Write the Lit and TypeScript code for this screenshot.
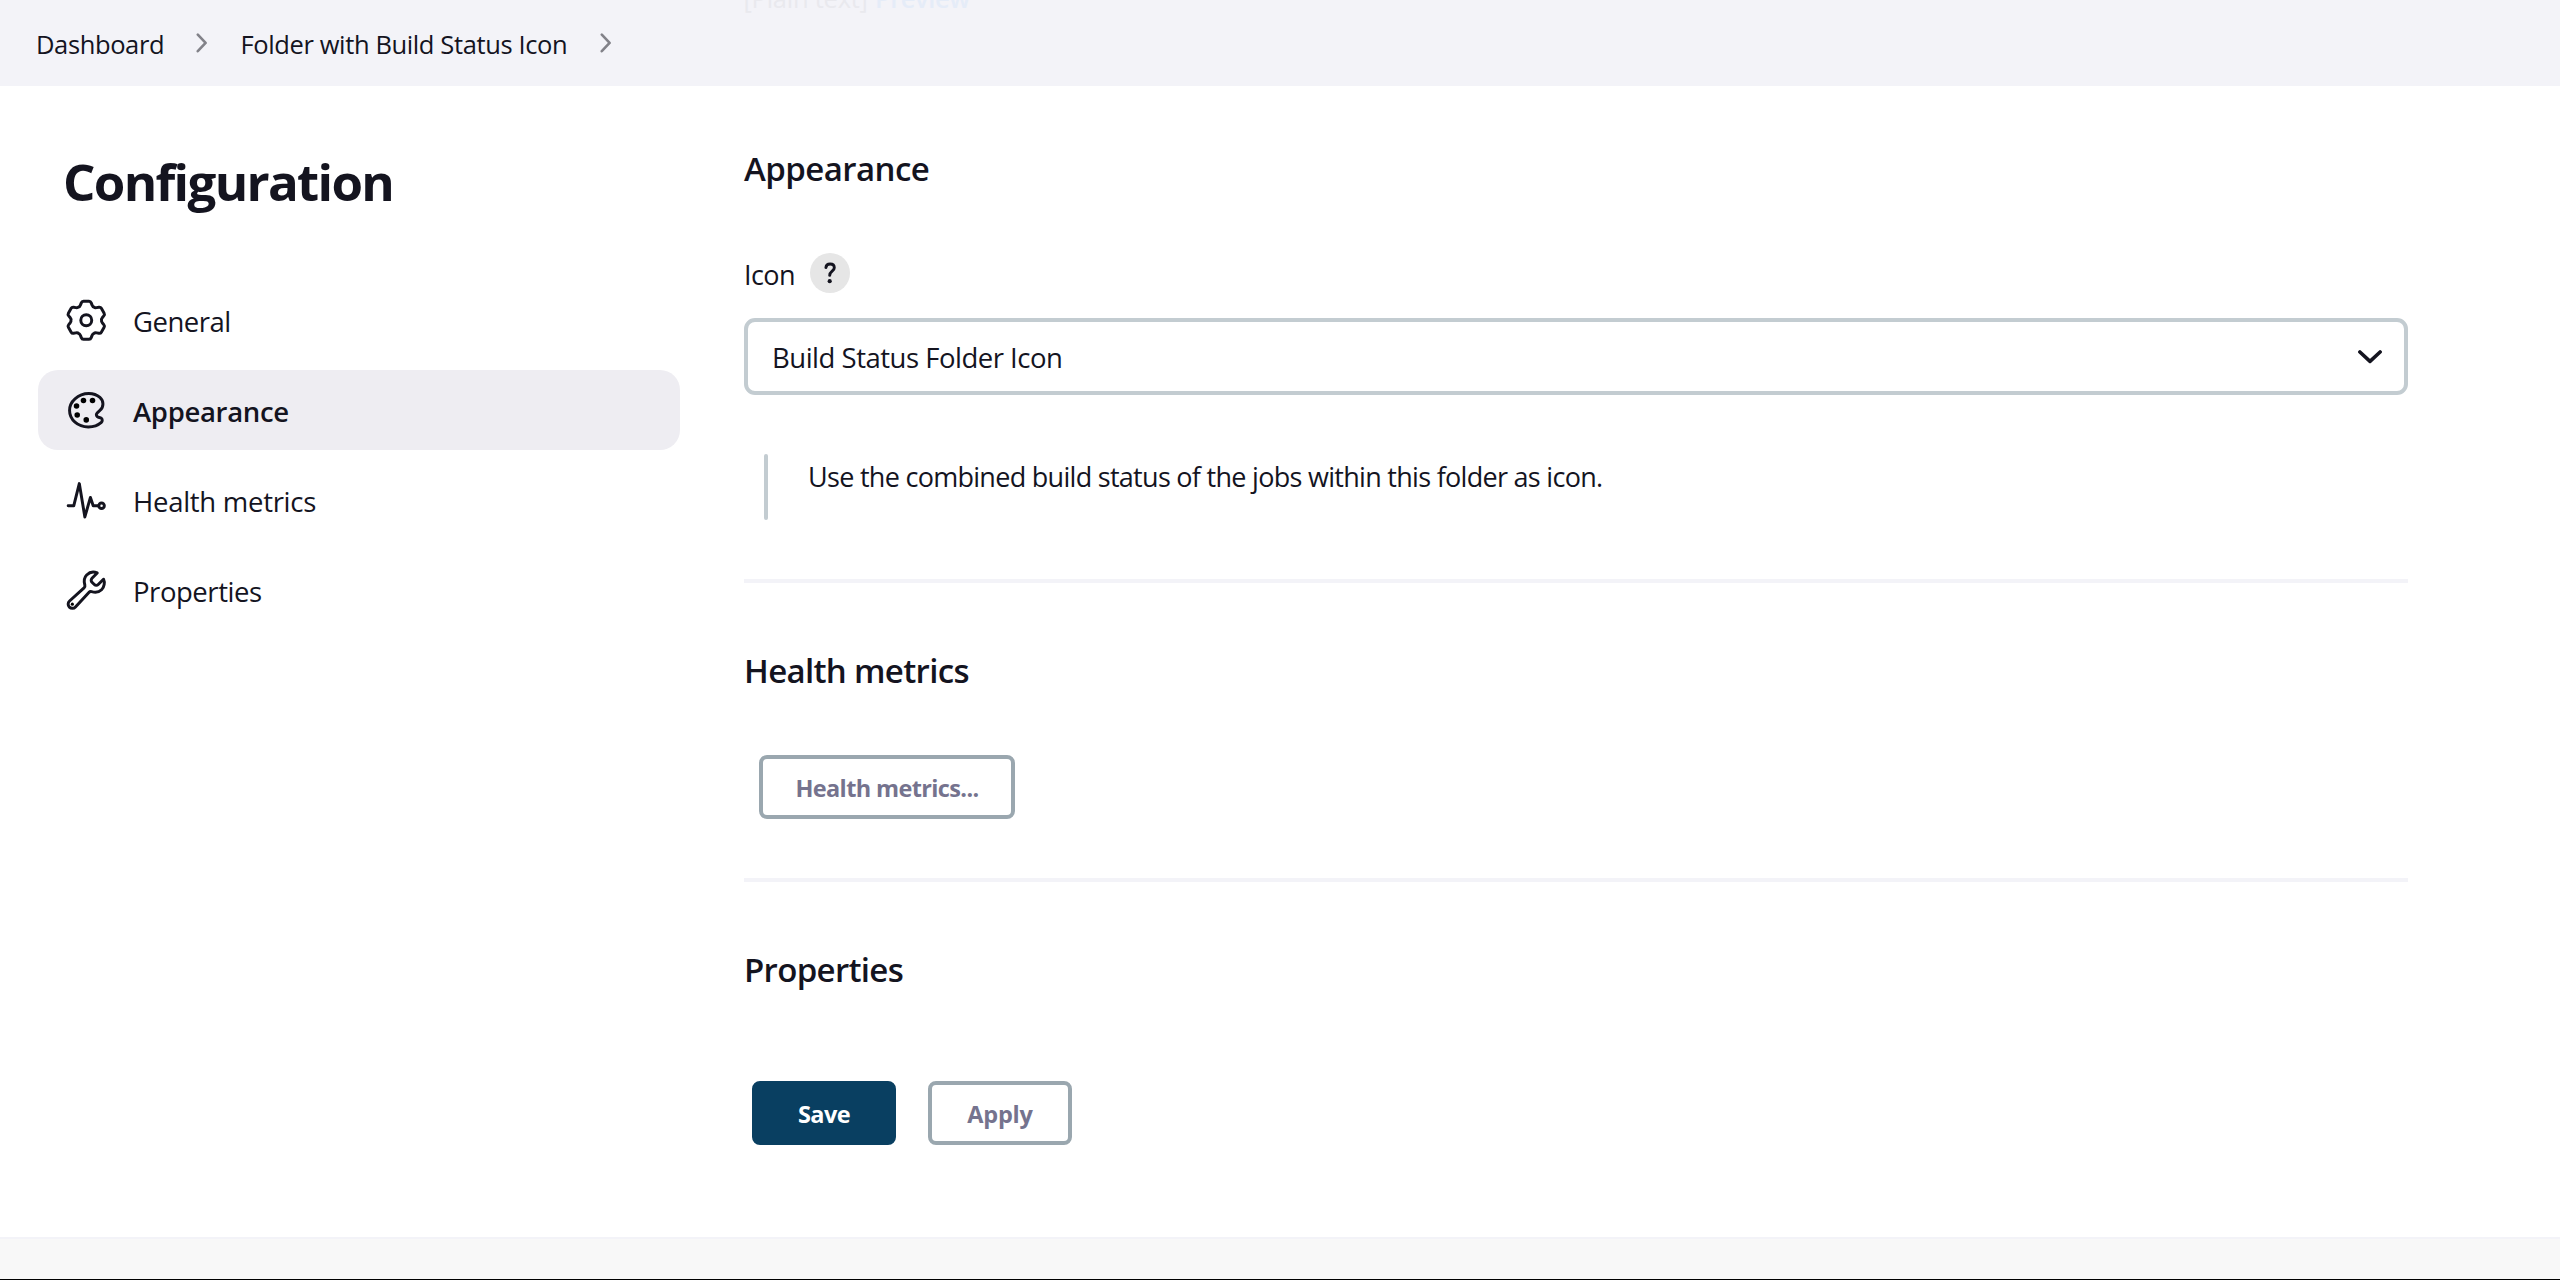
import { LitElement, html, css, svg } from "lit";
import { customElement, property } from "lit/decorators.js";
import { classMap } from "lit/directives/class-map.js";

// Outline of a six-toothed gear, centred on the 512 unit grid.
const gearOutline = (() => {
  const parts: string[] = [];
  for (let tooth = 0; tooth < 6; tooth++) {
    const a = (tooth * Math.PI) / 3;
    const p = (x: number, y: number) =>
      `${(256 + x * Math.cos(a) - y * Math.sin(a)).toFixed(2)} ${(256 + x * Math.sin(a) + y * Math.cos(a)).toFixed(2)}`;
    parts.push(
      `${tooth === 0 ? "M" : "L"}${p(-57, -200)}`,
      `Q${p(-50, -219)} ${p(-32, -219)}`,
      `L${p(32, -219)}`,
      `Q${p(50, -219)} ${p(57, -200)}`,
      `L${p(66, -177)}`,
      `Q${p(75, -155)} ${p(88, -152.4)}`,
      `Q${p(97, -142)} ${p(120.3, -145.7)}`
    );
  }
  return parts.join(" ") + "Z";
})();

const icons = {
  gear: svg`
    <path d=${gearOutline} />
    <circle cx="256" cy="256" r="63" />`,
  palette: svg`
    <path d="M430.11 347.9c-6.6-6.1-16.3-7.6-24.6-9-11.5-1.9-15.9-4-22.6-10-14.3-12.7-14.3-31.1 0-43.8l30.3-26.9c46.4-41 46.4-108.2 0-149.2-34.2-30.1-80.1-45-127.8-45-55.7 0-113.9 20.3-158.8 60.1-83.5 73.8-83.5 194.7 0 268.5 41.5 36.7 97.5 55 152.9 55.4h1.7c55.4 0 110-17.9 148.8-52.4 14.4-12.7 11.99-36.6.1-47.7z" />
    <g class="dots">
      <circle cx="144" cy="208" r="32" />
      <circle cx="152" cy="311" r="32" />
      <circle cx="224" cy="144" r="32" />
      <circle cx="256" cy="367" r="32" />
      <circle cx="328" cy="144" r="32" />
    </g>`,
  pulse: svg`
    <path d="M48 320h64l64-256 64 384 64-224 32 96h64" />
    <circle cx="432" cy="320" r="32" />`,
  wrench: svg`
    <path d="M393.87 190a32.1 32.1 0 01-45.25 0l-26.57-26.57a32.09 32.09 0 010-45.26L382.19 58a1 1 0 00-.3-1.64c-38.82-16.64-89.15-8.16-121.11 23.57-30.58 30.35-32.32 76-21.12 115.84a31.93 31.93 0 01-9.06 32.08L64 380a48.17 48.17 0 1068 68l153.86-167a31.93 31.93 0 0131.6-9.13c39.54 10.59 84.54 8.6 114.72-21.19 32.49-32 39.5-88.56 23.75-120.93a1 1 0 00-1.6-.26z" />
    <g class="dots"><circle cx="96" cy="416" r="18" /></g>`,
};

@customElement("side-nav")
class SideNav extends LitElement {
  @property() active = "";

  static styles = css`
    :host { display: flex; flex-direction: column; gap: 10px; }
    .item {
      display: flex; align-items: center; height: 80px; box-sizing: border-box;
      padding-left: 26px; border-radius: 20px; font-size: 27.5px; color: #14141f;
    }
    .on { background: #eeedf2; font-weight: 600; }
    .icon {
      width: 44.5px; height: 44.5px; margin-right: 24.5px; fill: none; stroke: #14141f;
      stroke-width: 34; stroke-linecap: round; stroke-linejoin: round;
    }
    .dots { fill: #000; stroke: none; }
    .label { line-height: 40px; padding-top: 3px; }
    .general { letter-spacing: -0.5px; }
    .appearance { letter-spacing: -0.32px; }
    .health { letter-spacing: -0.28px; }
    .properties { letter-spacing: -0.45px; }
  `;

  render() {
    const items = [
      { id: "general", label: "General", icon: icons.gear },
      { id: "appearance", label: "Appearance", icon: icons.palette },
      { id: "health", label: "Health metrics", icon: icons.pulse },
      { id: "properties", label: "Properties", icon: icons.wrench },
    ];
    return items.map(
      (i) => html`<div class=${classMap({ item: true, on: i.id === this.active })}>
        <svg class="icon" viewBox="0 0 512 512">${i.icon}</svg>
        <span class="label ${i.id}">${i.label}</span>
      </div>`
    );
  }
}

@customElement("app-root")
class AppRoot extends LitElement {
  static styles = css`
    :host {
      display: flex; flex-direction: column; height: 1280px; background: #fff;
      color: #14141f; overflow: hidden;
      font-family: "Open Sans", "Noto Sans", sans-serif;
    }
    .crumbs {
      position: relative; overflow: hidden; flex: none; height: 86px; display: flex;
      align-items: center; background: #f3f3f8; padding-left: 36px; font-size: 25.5px;
      box-sizing: border-box;
    }
    .crumb { line-height: 40px; padding-top: 2px; white-space: nowrap; letter-spacing: -0.38px; }
    .first { width: 160px; }
    .second { width: 359.5px; margin-left: 32.5px; }
    .sep { width: 12px; height: 20px; fill: none; stroke: #828289; stroke-width: 2.6; stroke-linecap: round; stroke-linejoin: round; }
    .behind {
      position: absolute; left: 743.5px; top: -20px; line-height: 36px; color: #e9e9ee;
      white-space: nowrap; letter-spacing: -0.25px;
    }
    .preview { color: #e5ecf8; font-weight: 600; letter-spacing: -0.45px; margin-left: 1px; }
    .body { flex: 1; display: flex; gap: 64px; padding-left: 38px; }
    .side { width: 642px; padding-top: 60px; }
    .title {
      margin: 0 0 64px 25px; font-size: 51px; line-height: 70px; font-weight: 700;
      letter-spacing: -1.68px;
    }
    .main { width: 1664px; padding-top: 61px; }
    .heading { margin: 0; font-size: 33px; line-height: 44px; font-weight: 600; letter-spacing: -0.67px; }
    .tight { letter-spacing: -0.55px; }
    .field { display: flex; height: 40px; margin-top: 62px; }
    .name { width: 66px; font-size: 27px; line-height: 40px; padding-top: 2px; letter-spacing: -0.6px; }
    .help { width: 40px; height: 40px; border-radius: 50%; background: #e6e6e6; }
    .mark { fill: none; stroke: #14141f; stroke-width: 2.9; stroke-linecap: round; stroke-linejoin: round; }
    .mark circle { fill: #14141f; stroke: none; }
    .select {
      margin-top: 25px; height: 77px; box-sizing: border-box; border: 4px solid #c3ccd1;
      border-radius: 11px; display: flex; align-items: center; justify-content: space-between;
      padding: 0 22px 0 24px; font-size: 27.5px; letter-spacing: -0.49px;
    }
    .value { padding-top: 2px; }
    .chev { width: 24px; height: 14px; fill: none; stroke: #14141f; stroke-width: 3.6; stroke-linecap: round; stroke-linejoin: round; }
    .quote { display: flex; margin: 59px 0 0 20px; height: 66px; font-size: 27px; line-height: 46px; letter-spacing: -0.71px; }
    .bar { width: 4px; border-radius: 2px; background: #c3ccd1; margin-right: 40px; }
    .rule { height: 4px; background: #f3f3f8; margin-top: 59px; }
    .second-heading { margin-top: 66px; }
    .third-heading { margin-top: 66px; }
    .btn {
      display: flex; align-items: center; justify-content: center; box-sizing: border-box;
      width: 144px; height: 64px; border: 4px solid #9aa7af; border-radius: 8px;
      background: #fff; color: #75738e; font: 700 23.5px "Open Sans", sans-serif;
      padding: 1px 0 0 0;
    }
    .metrics { width: 256px; margin: 62px 0 0 15px; letter-spacing: -0.63px; }
    .save { background: #093f61; border-color: #093f61; color: #fff; letter-spacing: -0.6px; }
    .apply { letter-spacing: -0.2px; }
    .actions { display: flex; gap: 32px; margin: 89px 0 0 8px; }
    .footer {
      flex: none; height: 43px; box-sizing: border-box; background: #f8f8f8;
      border-top: 2px solid #f3f3f8; border-bottom: 1px solid #000;
    }
  `;

  private separator() {
    return html`<svg class="sep" viewBox="0 0 12 20"><path d="M1.8 1.6 L9.6 9.9 L1.8 18.2" /></svg>`;
  }

  render() {
    return html`
      <div class="crumbs">
        <div class="behind">[Plain text] <span class="preview">Preview</span></div>
        <span class="crumb first">Dashboard</span>
        ${this.separator()}
        <span class="crumb second">Folder with Build Status Icon</span>
        ${this.separator()}
      </div>
      <div class="body">
        <div class="side">
          <h1 class="title">Configuration</h1>
          <side-nav active="appearance"></side-nav>
        </div>
        <div class="main">
          <h2 class="heading tight">Appearance</h2>
          <div class="field">
            <span class="name">Icon</span>
            <span class="help">
              <svg class="mark" width="40" height="40" viewBox="0 0 40 40">
                <path d="M15.9 14.6c.2-2.3 1.9-3.6 4.2-3.6 2.4 0 4.2 1.4 4.2 3.7 0 3.5-4.6 3.6-4.6 7.7" />
                <circle cx="19.7" cy="28.2" r="2.1" />
              </svg>
            </span>
          </div>
          <div class="select">
            <span class="value">Build Status Folder Icon</span>
            <svg class="chev" viewBox="0 0 24 14"><path d="M1.9 2 L12 11.4 L22.1 2" /></svg>
          </div>
          <div class="quote">
            <span class="bar"></span>
            <span>Use the combined build status of the jobs within this folder as icon.</span>
          </div>
          <div class="rule"></div>
          <h2 class="heading second-heading">Health metrics</h2>
          <button class="btn metrics">Health metrics...</button>
          <div class="rule"></div>
          <h2 class="heading third-heading">Properties</h2>
          <div class="actions">
            <button class="btn save">Save</button>
            <button class="btn apply">Apply</button>
          </div>
        </div>
      </div>
      <div class="footer"></div>
    `;
  }
}
